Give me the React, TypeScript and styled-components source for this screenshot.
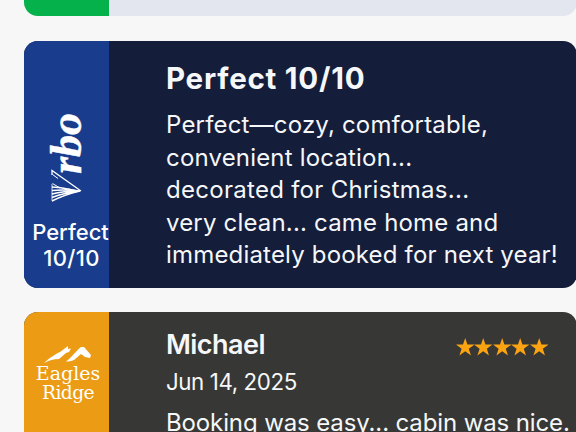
import React from 'react';
import styled, { createGlobalStyle } from 'styled-components';

const GlobalStyle = createGlobalStyle`
  *, *::before, *::after { box-sizing: border-box; }
  body {
    margin: 0;
    overflow: hidden;
    background: #f7f7f8;
    font-family: Inter, 'Open Sans', sans-serif;
  }
`;

const Feed = styled.main`
  display: flex;
  flex-direction: column;
  gap: 24.5px;
  width: 576px;
  height: 432px;
  padding-left: 24px;
  overflow: hidden;
`;

const Card = styled.article<{ $bg: string; $height: number; $clip?: 'top' | 'bottom' }>`
  display: flex;
  flex: none;
  width: 553px;
  height: ${p => p.$height}px;
  overflow: hidden;
  background: ${p => p.$bg};
  border-radius: ${p => (p.$clip === 'top' ? '0 0 14px 14px' : p.$clip === 'bottom' ? '14px 14px 0 0' : '14px')};
`;

const Source = styled.aside<{ $bg: string }>`
  display: flex;
  flex: none;
  flex-direction: column;
  align-items: center;
  width: 85px;
  background: ${p => p.$bg};
  color: #fff;
`;

const Content = styled.div<{ $top: number }>`
  flex: 1;
  min-width: 0;
  padding: ${p => p.$top}px 0 0 57px;
  color: #f6f7f9;
`;

const Title = styled.h2`
  margin: 0 0 13px;
  font-size: 29.5px;
  font-weight: 660;
  line-height: 36px;
  letter-spacing: 0.75px;
  white-space: nowrap;
`;

const Line = styled.p<{ $track?: number }>`
  margin: 0;
  font-size: 24px;
  font-weight: 380;
  line-height: 32.5px;
  letter-spacing: ${p => p.$track ?? 0.18}px;
  white-space: nowrap;
`;

const Header = styled.header`
  display: flex;
  align-items: center;
  justify-content: space-between;
  height: 34px;
  padding-right: 29px;
`;

const Name = styled.h2`
  margin: 0;
  font-size: 27px;
  font-weight: 640;
  line-height: 34px;
  letter-spacing: -0.55px;
`;

const Stars = styled.div`
  display: flex;
  padding-top: 4px;
`;

const DateText = styled.p`
  margin: 5px 0 10px;
  font-size: 22.3px;
  font-weight: 370;
  line-height: 30px;
  letter-spacing: -0.4px;
  white-space: nowrap;
`;

const VrboMark = styled.div`
  display: flex;
  flex-direction: column;
  align-items: center;
  width: 36px;
  height: 87px;
  margin-top: 76px;
`;

const VrboLetters = styled.span`
  height: 57px;
  margin-bottom: -5px;
  font: italic 700 44px/36px 'Liberation Serif', serif;
  -webkit-text-stroke: 0.4px #fff;
  writing-mode: vertical-rl;
  transform: rotate(180deg);
`;

const Score = styled.div`
  margin-top: 15px;
  padding-left: 8px;
  font-size: 22px;
  font-weight: 550;
  line-height: 26px;
  text-align: center;
  white-space: nowrap;
`;

const ScoreValue = styled.span`
  padding-left: 2px;
  letter-spacing: 0.3px;
`;

const RidgeMark = styled.div`
  display: flex;
  flex-direction: column;
  align-items: center;
  margin-top: 34px;
  padding-left: 3px;
`;

const RidgeWord = styled.span<{ $size: number; $track: number }>`
  font: 400 ${p => p.$size}px/19px 'DejaVu Serif', serif;
  letter-spacing: ${p => p.$track}px;
`;

const StarIcon = () => (
  <svg width="18.4" height="18" viewBox="0 0 18.4 18">
    <path fill="#fca311" d="M9.2 0l2.2 6.6h7l-5.6 4.1 2.2 6.8-5.8-4.2-5.8 4.2 2.2-6.8L0 6.6h7z" />
  </svg>
);

const Peaks = () => (
  <svg width="50" height="18" viewBox="0 0 50 18">
    <path fill="#fff" d="M1 17C6 12 13 8 17 6L25 0L25 3L28 2.500L26 6L23 7L16 13C11 13 6 14.500 1 17z" />
    <path fill="#fff" d="M23 15.500C28 12 34 4 38 1L41 1L48 9L47 12L42 11L38 8L31 14C28 15.500 26 15.500 23 15.500z" />
  </svg>
);

const StripedV = () => (
  <svg width="32" height="34" viewBox="0 0 32 34">
    <g stroke="#fff" fill="none">
      <path d="M1 6V1.500L30 22" strokeWidth="1.3" />
      <path d="M1.500 5.500L7 9.500M1.500 14.500L9 19" strokeWidth="1" />
      <path d="M1 15V31.500" strokeWidth="0.8" />
      <path d="M1 18C10 18 20 21 29 22M1 21.500C10 20.500 20 21 29 22M1 25C10 22.500 20 22 29 22M1 28.500C10 25 20 23 29 22M1 32C10 27.500 20 24 29 22" strokeWidth="1.5" />
    </g>
    <path fill="#fff" d="M17 19.500L30 22L19 25z" />
  </svg>
);

export default function App() {
  return (
    <>
      <GlobalStyle />
      <Feed>
        <Card $bg="#e4e6ef" $height={16} $clip="top">
          <Source $bg="#05b14b" />
        </Card>
        <Card $bg="#141d39" $height={247}>
          <Source $bg="#193d8c">
            <VrboMark>
              <VrboLetters>rbo</VrboLetters>
              <StripedV />
            </VrboMark>
            <Score>
              Perfect
              <br />
              <ScoreValue>10/10</ScoreValue>
            </Score>
          </Source>
          <Content $top={19.5}>
            <Title>Perfect 10/10</Title>
            <Line>Perfect—cozy, comfortable,</Line>
            <Line>convenient location...</Line>
            <Line $track={0.28}>decorated for Christmas...</Line>
            <Line>very clean... came home and</Line>
            <Line>immediately booked for next year!</Line>
          </Content>
        </Card>
        <Card $bg="#373735" $height={120} $clip="bottom">
          <Source $bg="#ec9c14">
            <RidgeMark>
              <Peaks />
              <RidgeWord $size={19} $track={0}>Eagles</RidgeWord>
              <RidgeWord $size={18.7} $track={-0.6}>Ridge</RidgeWord>
            </RidgeMark>
          </Source>
          <Content $top={16}>
            <Header>
              <Name>Michael</Name>
              <Stars aria-label="5 stars">
                {[0, 1, 2, 3, 4].map(i => (
                  <StarIcon key={i} />
                ))}
              </Stars>
            </Header>
            <DateText>Jun 14, 2025</DateText>
            <Line $track={-0.12}>Booking was easy... cabin was nice.</Line>
          </Content>
        </Card>
      </Feed>
    </>
  );
}
